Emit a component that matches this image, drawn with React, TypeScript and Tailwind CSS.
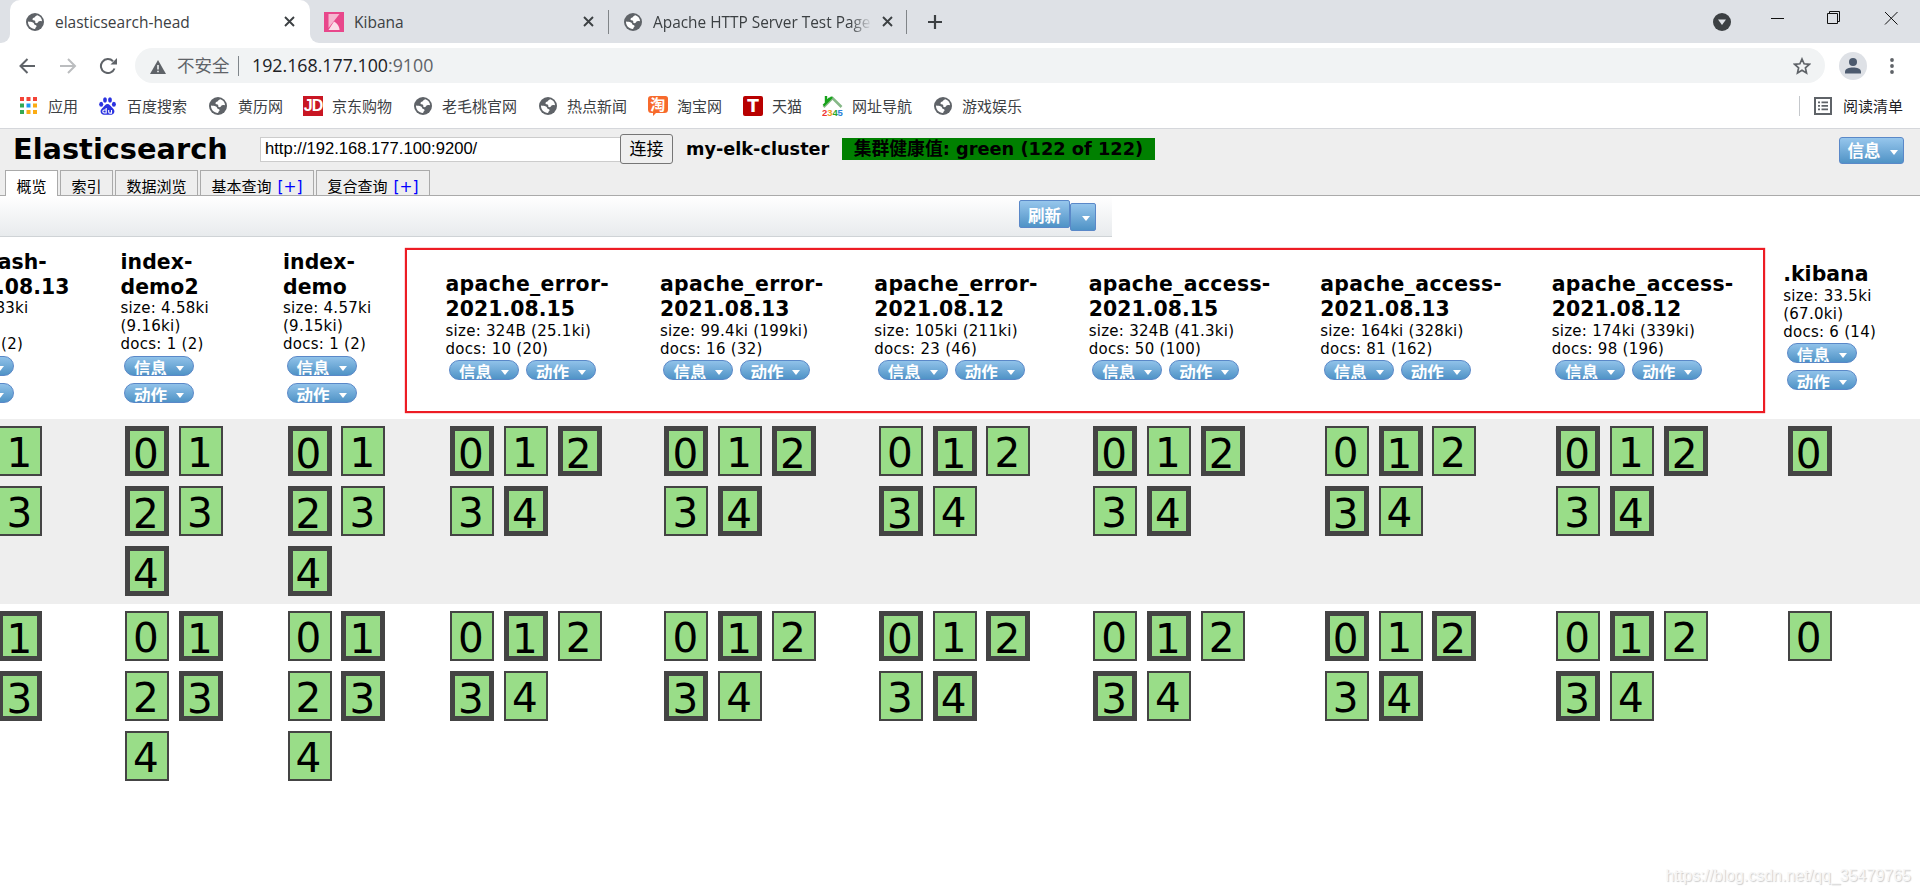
import type { ReactNode } from "react";

type Index = {
  name: string[];
  info: string[];
  shards: number[];
  // shards that are primary on the first node, the others are primary on the second
  primary: number[];
  width: string;
  stacked?: boolean;
};

const indices: Index[] = [
  { name: ["logstash-", "2021.08.13"], info: ["size: 4.83ki", "(9.66ki)", "docs: 1 (2)"], shards: [0, 1, 2, 3, 4], primary: [0, 2, 4], width: "w-[180.5px]", stacked: true },
  { name: ["index-", "demo2"], info: ["size: 4.58ki", "(9.16ki)", "docs: 1 (2)"], shards: [0, 1, 2, 3, 4], primary: [0, 2, 4], width: "w-[162.5px]", stacked: true },
  { name: ["index-", "demo"], info: ["size: 4.57ki", "(9.15ki)", "docs: 1 (2)"], shards: [0, 1, 2, 3, 4], primary: [0, 2, 4], width: "w-[162.5px]", stacked: true },
  { name: ["apache_error-", "2021.08.15"], info: ["size: 324B (25.1ki)", "docs: 10 (20)"], shards: [0, 1, 2, 3, 4], primary: [0, 2, 4], width: "w-[214.4px]" },
  { name: ["apache_error-", "2021.08.13"], info: ["size: 99.4ki (199ki)", "docs: 16 (32)"], shards: [0, 1, 2, 3, 4], primary: [0, 2, 4], width: "w-[214.4px]" },
  { name: ["apache_error-", "2021.08.12"], info: ["size: 105ki (211ki)", "docs: 23 (46)"], shards: [0, 1, 2, 3, 4], primary: [1, 3], width: "w-[214.4px]" },
  { name: ["apache_access-", "2021.08.15"], info: ["size: 324B (41.3ki)", "docs: 50 (100)"], shards: [0, 1, 2, 3, 4], primary: [0, 2, 4], width: "w-[231.5px]" },
  { name: ["apache_access-", "2021.08.13"], info: ["size: 164ki (328ki)", "docs: 81 (162)"], shards: [0, 1, 2, 3, 4], primary: [1, 3], width: "w-[231.5px]" },
  { name: ["apache_access-", "2021.08.12"], info: ["size: 174ki (339ki)", "docs: 98 (196)"], shards: [0, 1, 2, 3, 4], primary: [0, 2, 4], width: "w-[231.5px]" },
  { name: [".kibana"], info: ["size: 33.5ki", "(67.0ki)", "docs: 6 (14)"], shards: [0], primary: [0], width: "w-[162.5px]", stacked: true },
];

const Globe = () => (
  <svg className="h-[18px] w-[18px] shrink-0" viewBox="0 0 18 18">
    <circle cx="9" cy="9" r="9" fill="#5f6368" />
    <path
      d="M11.500 2.200c-1 .5-2.300.9-2.600 1.900-.3.900-1.900.600-2.300 1.600-.3 1 .2 1.500 1.200 1.600 1 0 1.500.8 1.500 1.700 0 .8.700 1.300 1.600 1.200 1.200-.2 1.100-1.700 2.300-1.900 1-.2 1.800-.4 2.900.1C15.900 5.400 14.200 3.100 11.500 2.200z"
      fill="#fff"
    />
    <path
      d="M2 8.600c1.700.4 3.500.3 5 .8 1.200.5.800 1.700 1.700 2.400.8.600 2 .5 1.900 1.500-.1.900-1.300 1.100-1.500 2.600C5 16 1.700 12.700 2 8.600z"
      fill="#fff"
    />
  </svg>
);

const CloseIcon = () => (
  <svg className="h-[11px] w-[11px] shrink-0" viewBox="0 0 11 11" stroke="#3c4043" strokeWidth="1.900">
    <path d="M1 1l9 9M10 1l-9 9" />
  </svg>
);

const KibanaIcon = () => (
  <svg className="h-5 w-5 shrink-0" viewBox="0 0 20 20">
    <path d="M0 0h20v20H0z" fill="#e8478b" />
    <path d="M4.500 2h11L4.500 16z" fill="#f6b6d0" />
    <path d="M4.500 18L10 9.500c3 1.500 5.500 5 5.500 8.500z" fill="#fbdde9" />
  </svg>
);

const AppsIcon = () => (
  <svg className="h-[17px] w-[17px]" viewBox="0 0 17 17">
    <path d="M0 0h4v4H0zM6.500 0h4v4h-4zM13 0h4v4h-4z" fill="#f44336" />
    <path d="M0 6.500h4v4H0zM0 13h4v4H0z" fill="#34a853" />
    <path d="M6.500 6.500h4v4h-4z" fill="#2196f3" />
    <path d="M13 6.500h4v4h-4zM6.500 13h4v4h-4zM13 13h4v4h-4z" fill="#fbac13" />
  </svg>
);

const BaiduIcon = () => (
  <svg className="h-[18px] w-[17px]" viewBox="0 0 17 18" fill="#2a32e0">
    <ellipse cx="2.200" cy="7.300" rx="2" ry="2.500" />
    <ellipse cx="6" cy="3" rx="1.900" ry="2.700" />
    <ellipse cx="11" cy="3" rx="1.900" ry="2.700" />
    <ellipse cx="14.900" cy="7.300" rx="2" ry="2.500" />
    <path d="M8.500 7c2 0 3 2 4.500 3.500 2 1.800 2.800 3 2.200 5-.6 2.200-2.800 2.600-6.700 2.200-3.900.4-6.100 0-6.700-2.200-.6-2 .2-3.200 2.200-5C5.500 9 6.500 7 8.500 7z" />
    <path d="M7.200 11v5H5.300a1.400 1.400 0 010-3h1.900M9.700 13v1.900c0 1 .6 1.200 1.200 1.200h1.600V13" fill="none" stroke="#fff" strokeWidth="1.100" />
  </svg>
);

const TaobaoIcon = () => (
  <svg className="h-5 w-5" viewBox="0 0 20 20">
    <path d="M5 0h12.500A2.500 2.500 0 0120 2.500v11a3.500 3.500 0 01-3.500 3.500H8l-3 3v-3H3.500A3.500 3.500 0 010 13.500V3a3 3 0 013-3z" fill="#f76a2c" />
    <text x="2.300" y="14" fontSize="15" fontWeight="700" fill="#fff">淘</text>
  </svg>
);

const HomeIcon = () => (
  <svg className="h-5 w-[21px]" viewBox="0 0 21 20">
    <path d="M1.500 11L10.500 2l9 9" fill="none" stroke="#86b887" strokeWidth="2.600" />
    <path d="M1.500 9.500L10 1M4 0v6l4-4" fill="none" stroke="#17a31a" strokeWidth="2.400" />
    <g fontFamily="Liberation Sans, sans-serif" fontSize="9.500" fontWeight="700">
      <text x="0" y="19.500" fill="#e33">2</text>
      <text x="5.200" y="19.500" fill="#f39a1d">3</text>
      <text x="10.400" y="19.500" fill="#2aa52a">4</text>
      <text x="15.600" y="19.500" fill="#2a7fd8">5</text>
    </g>
  </svg>
);

const ListIcon = () => (
  <svg className="h-[18px] w-[18px]" viewBox="0 0 18 18">
    <path d="M1 1h16v16H1z" fill="none" stroke="#5f6368" strokeWidth="2" />
    <path d="M4 4.500h2v1.800H4zM4 8h2v1.800H4zM4 11.500h2v1.800H4zM7.500 4.500H14v1.800H7.500zM7.500 8H14v1.800H7.500zM7.500 11.500H14v1.800H7.500z" fill="#5f6368" />
  </svg>
);

const Bookmark = ({ icon, label, className }: { icon: ReactNode; label: string; className: string }) => (
  <div className={`flex shrink-0 items-center ${className}`}>
    {icon}
    <span className="text-[15px] leading-5 whitespace-nowrap text-[#3c4043]">{label}</span>
  </div>
);

const Caret = () => <span className="h-0 w-0 border-x-[4.5px] border-t-[5px] border-x-transparent border-t-white" />;

const Chip = ({ label }: { label: string }) => (
  <div className="mx-[3.5px] mt-[2.5px] mb-[4.5px] flex h-5 w-[70px] shrink-0 items-start justify-center gap-[9px] overflow-hidden rounded-full border border-[#5a88c8] bg-linear-to-b from-[#90c2e9] to-[#4f93c6] text-[16.5px] font-bold text-white">
    <span className="mt-[3px] leading-5 whitespace-nowrap">{label}</span>
    <span className="mt-[9px] flex">
      <Caret />
    </span>
  </div>
);

const Shard = ({ id, primary }: { id: number; primary: boolean }) => (
  <div
    className={`h-[50px] w-11 shrink-0 border-[#444] bg-[#99dd88] text-[40.5px] ${
      primary ? "border-[5px] pl-[3px] leading-[47px]" : "border-2 pl-1.5 leading-[51px]"
    }`}
  >
    {id}
  </div>
);

const NodeRow = ({ second, className }: { second?: boolean; className: string }) => (
  <div className={`flex w-[2100px] ${className}`}>
    {indices.map((index, i) => (
      <div key={i} className={`shrink-0 ${index.width}`}>
        <div className={`flex flex-wrap gap-x-[9.8px] gap-y-2.5 pt-[7px] pl-[4.6px] ${index.stacked ? "w-[110px]" : "w-[165px]"}`}>
          {index.shards.map((id) => (
            <Shard key={id} id={id} primary={index.primary.includes(id) !== !!second} />
          ))}
        </div>
      </div>
    ))}
  </div>
);

const Tab = ({ label, active, plus, width }: { label: string; active?: boolean; plus?: boolean; width: string }) => (
  <div
    className={`mr-0.5 flex items-start justify-center gap-1.5 border border-b-0 border-[#aaa] pt-[5px] text-[15px] leading-[23px] whitespace-nowrap ${width} ${
      active ? "h-[26px] bg-white" : "h-[25px] bg-[#eee]"
    }`}
  >
    {label}
    {plus && <span className="text-[15.5px] text-[#00f]">[+]</span>}
  </div>
);

const BrowserChrome = () => (
  <div className="font-['Open_Sans','Noto_Sans_CJK_SC',sans-serif]">
    <div className="flex h-[43px] bg-[#dee1e6]">
      <div className="flex w-2.5 items-end bg-white">
        <div className="h-[43px] w-2.5 rounded-br-[9px] bg-[#dee1e6]" />
      </div>
      <div className="flex w-[300px] items-center rounded-t-[10px] bg-white pl-4">
        <Globe />
        <span className="mt-0.5 ml-[11px] w-[229px] text-[15.5px] text-[#3c4043]">elasticsearch-head</span>
        <CloseIcon />
      </div>
      <div className="w-[299px] bg-white">
        <div className="flex h-[43px] items-center rounded-bl-[9px] bg-[#dee1e6] pl-3.5">
          <KibanaIcon />
          <span className="mt-0.5 ml-2.5 w-[229px] text-[15.5px] text-[#3c4043]">Kibana</span>
          <CloseIcon />
        </div>
      </div>
      <div className="-ml-px flex items-center">
        <div className="h-6 w-px bg-[#808488]" />
        <div className="ml-[15px]">
          <Globe />
        </div>
        <span className="mt-0.5 ml-[11px] w-[219px] overflow-hidden mask-r-from-90% text-[15.4px] whitespace-nowrap text-[#3c4043]">
          Apache HTTP Server Test Page
        </span>
        <div className="ml-2.5">
          <CloseIcon />
        </div>
        <div className="ml-[13px] h-6 w-px bg-[#808488]" />
        <svg className="ml-[21px] h-3.5 w-3.5" viewBox="0 0 14 14" stroke="#3c4043" strokeWidth="2.200">
          <path d="M7 0v14M0 7h14" />
        </svg>
      </div>
      <div className="ml-auto flex items-center pr-[22px]">
        <svg className="mr-10 h-[18px] w-[18px]" viewBox="0 0 18 18">
          <circle cx="9" cy="9" r="9" fill="#3c4043" />
          <path d="M5 6.500h8L9 12z" fill="#dee1e6" />
        </svg>
        <svg className="-mt-2 h-3.5 w-[127px]" viewBox="0 0 127 14" fill="none" stroke="#111" strokeWidth="1">
          <path d="M0 7.500h13" />
          <path d="M56.500 2.500h10v10h-10zM58.500 2.500v-2h10v10h-2" />
          <path d="M114 1l12.500 12.500M126.500 1L114 13.500" />
        </svg>
      </div>
    </div>

    <div className="flex h-[45px] items-center">
      <svg className="ml-[19px] h-4 w-[98px]" viewBox="0 0 98 16" fill="none" stroke="#5f6368" strokeWidth="2">
        <path d="M16 8H1.500M8.500 1L1.500 8l7 7" />
        <path d="M41 8h14.500M49 1l7 7-7 7" stroke="#bbbdbf" />
        <path d="M95.500 10.500A7 7 0 1194 3.200" />
        <path d="M98 0v6.500h-6.500z" fill="#5f6368" stroke="none" />
      </svg>
      <div className="ml-[18px] flex h-[35px] w-[1690px] items-center rounded-full bg-[#f1f3f4] pl-[15px] text-[17.8px]">
        <svg className="mt-0.5 h-3.5 w-4" viewBox="0 0 16 14">
          <path d="M8 0l8 14H0z" fill="#5f6368" />
          <path d="M7.200 5h1.600v4.500H7.200zM7.200 10.700h1.600v1.600H7.200z" fill="#f1f3f4" />
        </svg>
        <span className="ml-[11px] w-[53px] text-[17.5px] whitespace-nowrap text-[#5f6368]">不安全</span>
        <div className="ml-2 h-5 w-px bg-[#80868b]" />
        <span className="ml-[13px] text-[#202124]">192.168.177.100</span>
        <span className="text-[#5f6368]">:9100</span>
        <svg className="mr-3.5 ml-auto h-[18px] w-[18px]" viewBox="0 0 18 18" fill="none" stroke="#5f6368" strokeWidth="1.700">
          <path d="M9 2l2.100 4.800 5.200.5-3.900 3.500 1.100 5.100L9 13.200l-4.500 2.700 1.100-5.100-3.900-3.500 5.200-.5z" />
        </svg>
      </div>
      <svg className="ml-3.5 h-7 w-7" viewBox="0 0 28 28">
        <circle cx="14" cy="14" r="14" fill="#dee1e6" />
        <circle cx="14" cy="10" r="4" fill="#4c5a6e" />
        <path d="M6 21.500v-1.800c0-3 4-4.200 8-4.200s8 1.200 8 4.200v1.800z" fill="#4c5a6e" />
      </svg>
      <svg className="ml-[23px] h-4 w-1" viewBox="0 0 4 16" fill="#5f6368">
        <circle cx="2" cy="2" r="1.900" />
        <circle cx="2" cy="8" r="1.900" />
        <circle cx="2" cy="14" r="1.900" />
      </svg>
    </div>

    <div className="flex h-[41px] items-center border-b border-[#d5d7db] pb-[5px]">
      <Bookmark icon={<AppsIcon />} label="应用" className="ml-5 w-[79px] gap-[11px]" />
      <Bookmark icon={<BaiduIcon />} label="百度搜索" className="w-[110px] gap-[11px]" />
      <Bookmark icon={<Globe />} label="黄历网" className="w-[94px] gap-[11px]" />
      <Bookmark
        icon={
          <span className="flex h-5 w-5 items-center justify-center bg-[#c91623] font-['Liberation_Sans_Narrow','Liberation_Sans'] text-[16px] font-bold tracking-[-1px] text-white">
            JD
          </span>
        }
        label="京东购物"
        className="w-[111px] gap-[9px]"
      />
      <Bookmark icon={<Globe />} label="老毛桃官网" className="w-[125px] gap-[10px]" />
      <Bookmark icon={<Globe />} label="热点新闻" className="w-[109px] gap-[10px]" />
      <Bookmark icon={<TaobaoIcon />} label="淘宝网" className="w-[95px] gap-[9px]" />
      <Bookmark
        icon={
          <span className="flex h-5 w-5 items-center justify-center rounded-[2px] bg-[#b80000] font-['DejaVu_Sans'] text-[17px] leading-5 font-bold text-white">
            T
          </span>
        }
        label="天猫"
        className="w-[79px] gap-[9px]"
      />
      <Bookmark icon={<HomeIcon />} label="网址导航" className="w-[112px] gap-[9px]" />
      <Bookmark icon={<Globe />} label="游戏娱乐" className="gap-[10px]" />
      <div className="ml-auto flex items-center pr-[17px]">
        <div className="mr-3.5 h-5 w-px bg-[#c5c8cc]" />
        <ListIcon />
        <span className="ml-[11px] text-[15px] leading-5 text-[#202124]">阅读清单</span>
      </div>
    </div>
  </div>
);

const App = () => {
  return (
    <div className="relative h-[894px] w-full overflow-hidden bg-white font-['DejaVu_Sans','Noto_Sans_CJK_SC',sans-serif] text-black">
      <BrowserChrome />

      <header className="flex h-[67px] flex-col justify-between bg-[#eee]">
        <div className="flex h-10 items-center pl-[13px]">
          <h1 className="w-[247px] text-[28.8px] leading-10 font-bold">Elasticsearch</h1>
          <div className="flex h-[25px] w-[361px] items-center border border-[#ccc] bg-white pl-1 font-['Liberation_Sans'] text-[16.6px]">
            http://192.168.177.100:9200/
          </div>
          <button className="-ml-px flex h-[30px] w-[53px] items-center justify-center rounded-[3px] border border-[#767676] bg-[#efefef] pt-0.5 text-[17px]">
            连接
          </button>
          <span className="ml-[13px] w-[156px] text-[17.7px] font-bold whitespace-nowrap">my-elk-cluster</span>
          <span className="flex h-[22px] w-[313px] items-center justify-center bg-[#008000] text-[17.8px] font-bold whitespace-nowrap">
            集群健康值: green (122 of 122)
          </span>
          <div className="mt-0.5 mr-4 ml-auto flex h-[27px] w-[65px] items-center justify-center gap-[9px] rounded-[3px] border border-[#5a88c8] bg-linear-to-b from-[#96c6ec] to-[#4f93c6] pt-1 pl-0.5 text-[16.5px] font-bold text-white">
            信息
            <Caret />
          </div>
        </div>
        <nav className="flex h-[26px] items-start border-b border-[#aaa] pl-[5px]">
          <Tab label="概览" active width="w-[53px]" />
          <Tab label="索引" width="w-[53px]" />
          <Tab label="数据浏览" width="w-[83px]" />
          <Tab label="基本查询" plus width="w-[114px]" />
          <Tab label="复合查询" plus width="w-[114px]" />
        </nav>
      </header>

      <div className="flex h-[41px] w-[1112px] justify-end border-b border-[#cfd3d6] bg-linear-to-b from-white to-[#e8ebed] pr-4">
        <div className="mt-1 flex h-7 w-[51px] items-center justify-center rounded-[2px] border border-[#5a88c8] bg-linear-to-b from-[#96c6ec] to-[#4f93c6] pt-1.5 text-[16.5px] font-bold text-white">
          刷新
        </div>
        <div className="mt-[7px] flex h-7 w-[26px] items-center justify-center rounded-[2px] border border-[#5a88c8] bg-linear-to-b from-[#96c6ec] to-[#4f93c6] pt-0.5 pl-1.5">
          <Caret />
        </div>
      </div>

      <div className="-ml-[60px]">
        <div className="flex h-[182px] w-[2100px] items-center pt-px">
          {indices.map((index, i) => (
            <div key={i} className={`shrink-0 ${index.width}`}>
              {index.name.map((line, n) => (
                <div
                  key={n}
                  className={`text-[20.4px] leading-[24.8px] font-bold whitespace-nowrap ${line.startsWith("apache") ? "tracking-[0.34px]" : "tracking-[0.06px]"}`}
                >
                  {line}
                </div>
              ))}
              {index.info.map((line, n) => (
                <div key={n} className="text-[15px] leading-[18px] tracking-[0.27px] whitespace-nowrap">{line}</div>
              ))}
              <div className={index.stacked ? "flex flex-col" : "flex"}>
                <Chip label="信息" />
                <Chip label="动作" />
              </div>
            </div>
          ))}
        </div>
        <NodeRow className="h-[185px] bg-[#eee]" />
        <NodeRow second className="h-[185px]" />
      </div>

      <div className="absolute top-[248px] left-[405px] h-[165px] w-[1360px] border-2 border-[#ed1c24] shadow-[0_0_1px_#ed1c24]" />
      <div className="absolute right-[9px] bottom-1.5 font-['Liberation_Sans'] text-base text-[#f7f7f7] [text-shadow:1px_1px_1px_#ccc]">
        https://blog.csdn.net/qq_35479765
      </div>
    </div>
  );
};

export default App;
